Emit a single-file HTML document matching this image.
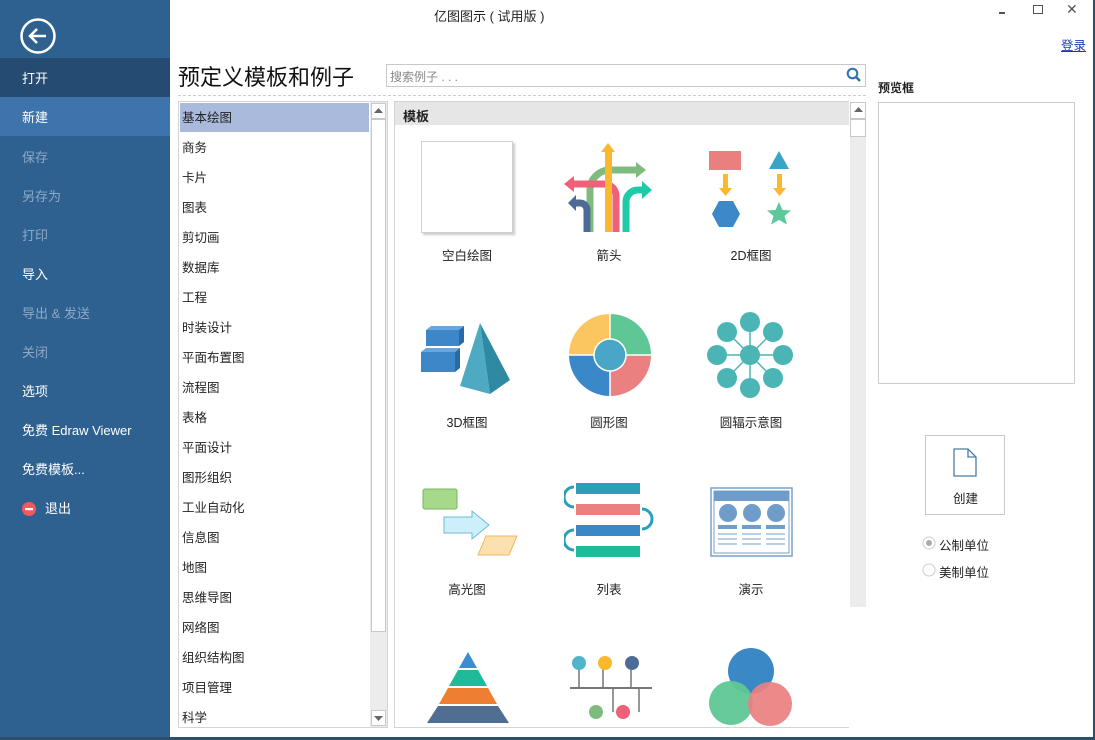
<!DOCTYPE html>
<html><head><meta charset="utf-8"><style>
*{margin:0;padding:0;box-sizing:border-box}
body{width:1095px;height:740px;position:relative;overflow:hidden;background:#fff;font-family:"Liberation Sans","Noto Sans CJK SC",sans-serif;font-size:13px;color:#222}
.abs{position:absolute}
#side{left:0;top:0;width:170px;height:740px;background:#2f6190}
.mi{position:absolute;left:0;width:170px;height:39px;line-height:42px;padding-left:22px;color:#fff;font-size:13px}
.dim{color:#8fa9c6}
.li{position:absolute;left:182px;font-size:12.5px;line-height:14px}
.lab{position:absolute;width:140px;text-align:center;font-size:12.5px}
</style></head><body>
<div id="side" class="abs">
 <svg class="abs" style="left:19px;top:17px" width="38" height="38"><circle cx="19" cy="19" r="16.5" fill="none" stroke="#fff" stroke-width="2.5"/><path d="M27 19H12M18 12l-7 7 7 7" fill="none" stroke="#fff" stroke-width="2.5"/></svg>
 <div class="mi" style="top:58px;background:#264b72">打开</div>
 <div class="mi" style="top:97px;background:#3d74ac">新建</div>
 <div class="mi dim" style="top:137px">保存</div>
 <div class="mi dim" style="top:176px">另存为</div>
 <div class="mi dim" style="top:215px">打印</div>
 <div class="mi" style="top:254px">导入</div>
 <div class="mi dim" style="top:293px">导出 &amp; 发送</div>
 <div class="mi dim" style="top:332px">关闭</div>
 <div class="mi" style="top:371px">选项</div>
 <div class="mi" style="top:410px">免费 Edraw Viewer</div>
 <div class="mi" style="top:449px">免费模板...</div>
 <div class="mi" style="top:488px;padding-left:45px">退出</div>
 <svg class="abs" style="left:22px;top:502px" width="14" height="14"><circle cx="7" cy="7" r="7" fill="#f05a5a"/><rect x="3" y="6" width="8" height="2.2" fill="#fff"/></svg>
</div>
<div class="abs" style="left:1093px;top:0;width:2px;height:740px;background:#2e4f6b"></div>
<div class="abs" style="left:0;top:737px;width:1095px;height:3px;background:#2e4f6b"></div>
<div class="abs" style="left:434px;top:6px;font-size:13px">亿图图示 ( 试用版 )</div>
<div class="abs" style="left:999px;top:12px;width:6px;height:2px;background:#555"></div>
<div class="abs" style="left:1033px;top:5px;width:10px;height:9px;border:1.3px solid #555"></div>
<div class="abs" style="left:1066px;top:1px;font-size:14px;color:#555">✕</div>
<div class="abs" style="left:1061px;top:35px;font-size:12.5px;color:#1a3ab0;text-decoration:underline">登录</div>
<div class="abs" style="left:178px;top:60px;font-size:22px;color:#111">预定义模板和例子</div>
<div class="abs" style="left:386px;top:64px;width:480px;height:23px;border:1px solid #c8c8c8"></div>
<div class="abs" style="left:390px;top:68px;font-size:12px;color:#888">搜索例子 . . .</div>
<svg class="abs" style="left:846px;top:67px" width="16" height="16"><circle cx="6.5" cy="6.5" r="4.8" fill="none" stroke="#2f6fb5" stroke-width="2"/><path d="M10 10l4 4" stroke="#2f6fb5" stroke-width="2.4"/></svg>
<div class="abs" style="left:178px;top:95px;width:688px;border-top:1px dashed #ccc"></div>
<div class="abs" style="left:178px;top:101px;width:210px;height:627px;border:1px solid #d4d4d4"></div>
<div class="abs" style="left:180px;top:103px;width:189px;height:29px;background:#aabadc"></div>
<div class="abs" style="left:370px;top:102px;width:17px;height:625px;background:#ececec"></div>
<div class="abs" style="left:371px;top:103px;width:15px;height:16px;background:#fff;border:1px solid #c8c8c8"></div>
<div class="abs" style="left:371px;top:119px;width:15px;height:513px;background:#fff;border:1px solid #c8c8c8"></div>
<div class="abs" style="left:371px;top:710px;width:15px;height:16px;background:#fff;border:1px solid #c8c8c8"></div>
<svg class="abs" style="left:373px;top:107px" width="11" height="8"><path d="M1 6h9L5.5 1z" fill="#666"/></svg>
<svg class="abs" style="left:373px;top:714px" width="11" height="8"><path d="M1 2h9L5.5 7z" fill="#666"/></svg>
<div class="li" style="top:111px">基本绘图</div>
<div class="li" style="top:141px">商务</div>
<div class="li" style="top:171px">卡片</div>
<div class="li" style="top:201px">图表</div>
<div class="li" style="top:231px">剪切画</div>
<div class="li" style="top:261px">数据库</div>
<div class="li" style="top:291px">工程</div>
<div class="li" style="top:321px">时装设计</div>
<div class="li" style="top:351px">平面布置图</div>
<div class="li" style="top:381px">流程图</div>
<div class="li" style="top:411px">表格</div>
<div class="li" style="top:441px">平面设计</div>
<div class="li" style="top:471px">图形组织</div>
<div class="li" style="top:501px">工业自动化</div>
<div class="li" style="top:531px">信息图</div>
<div class="li" style="top:561px">地图</div>
<div class="li" style="top:591px">思维导图</div>
<div class="li" style="top:621px">网络图</div>
<div class="li" style="top:651px">组织结构图</div>
<div class="li" style="top:681px">项目管理</div>
<div class="li" style="top:711px">科学</div>
<div class="abs" style="left:394px;top:101px;width:455px;height:627px;border-left:1px solid #d4d4d4;border-top:1px solid #d4d4d4;border-bottom:1px solid #d4d4d4"></div>
<div class="abs" style="left:395px;top:102px;width:454px;height:23px;background:#e6e6e6"></div>
<div class="abs" style="left:403px;top:106px;font-weight:bold;font-size:13px">模板</div>
<div class="abs" style="left:850px;top:102px;width:16px;height:505px;background:#ececec"></div>
<div class="abs" style="left:850px;top:102px;width:16px;height:17px;background:#fff;border:1px solid #c8c8c8"></div>
<div class="abs" style="left:850px;top:119px;width:16px;height:18px;background:#fff;border:1px solid #c8c8c8"></div>
<svg class="abs" style="left:853px;top:106px" width="11" height="8"><path d="M1 6h9L5.5 1z" fill="#666"/></svg>
<div class="abs" style="left:421px;top:141px;width:92px;height:92px;border:1px solid #d0d0d0;box-shadow:2px 2px 2px #ccc"></div>
<svg class="abs" style="left:560px;top:140px" width="96" height="94">
 <path d="M76 30H50a20 20 0 0 0-20 20V92" fill="none" stroke="#7fbb7f" stroke-width="7"/><path d="M76 22l10 8-10 8z" fill="#7fbb7f"/>
 <path d="M12 44H44a12 12 0 0 1 12 12V92" fill="none" stroke="#ef6079" stroke-width="7"/><path d="M14 36l-10 8 10 8z" fill="#ef6079"/>
 <path d="M14 63h6a7 7 0 0 1 7 7V92" fill="none" stroke="#4c6b96" stroke-width="7"/><path d="M16 55l-8 8 8 8z" fill="#4c6b96"/>
 <rect x="45" y="10" width="7" height="82" fill="#fbb82e"/><path d="M41 12l7-9 7 9z" fill="#fbb82e"/>
 <path d="M66 92V62a12 12 0 0 1 12-12h4" fill="none" stroke="#1fcaa8" stroke-width="7"/><path d="M82 41l10 9-10 9z" fill="#1fcaa8"/>
</svg>
<svg class="abs" style="left:705px;top:148px" width="90" height="82">
 <rect x="4" y="3" width="32" height="19" fill="#ea7f7f"/><rect x="18" y="26" width="5" height="16" fill="#fbb82e"/><path d="M14 40h13l-6.5 8z" fill="#fbb82e"/>
 <path d="M7 66l7-13h14l7 13-7 13H14z" fill="#3c88c8"/>
 <path d="M74 3l10 18H64z" fill="#3aa4c6"/><rect x="72" y="26" width="5" height="16" fill="#fbb82e"/><path d="M68 40h13l-6.5 8z" fill="#fbb82e"/>
 <path d="M74 54l3.5 8 8.5 .5-6.5 5.5 2.5 8.5-8-4.5-8 4.5 2.5-8.5-6.5-5.5 8.5-.5z" fill="#5cc99a"/>
</svg>
<div class="lab" style="left:397px;top:245px">空白绘图</div>
<div class="lab" style="left:539px;top:245px">箭头</div>
<div class="lab" style="left:681px;top:245px">2D框图</div>
<svg class="abs" style="left:418px;top:320px" width="100" height="75">
 <path d="M8 10l5-4h33l-5 4z" fill="#6aa6dc"/><rect x="8" y="10" width="33" height="16" fill="#3d87c8"/><path d="M41 10l5-4v16l-5 4z" fill="#2a68a8"/>
 <path d="M3 32l5-4h34l-5 4z" fill="#6aa6dc"/><rect x="3" y="32" width="34" height="20" fill="#3d87c8"/><path d="M37 32l5-4v20l-5 4z" fill="#2a68a8"/>
 <path d="M62 3L42 66l30 8z" fill="#4eaac2"/><path d="M62 3l30 57-20 14z" fill="#2e8aa3"/>
</svg>
<svg class="abs" style="left:567px;top:312px" width="86" height="86">
 <path d="M43 2A41 41 0 0 1 84 43H43z" fill="#5ec795"/><path d="M84 43A41 41 0 0 1 43 84V43z" fill="#ea8080"/>
 <path d="M43 84A41 41 0 0 1 2 43H43z" fill="#3b88c8"/><path d="M2 43A41 41 0 0 1 43 2V43z" fill="#fbc660"/>
 <path d="M43 2V84M2 43H84" stroke="#fff" stroke-width="1.5"/>
 <circle cx="43" cy="43" r="16" fill="#4aa6c6" stroke="#fff" stroke-width="1.5"/>
</svg>
<svg class="abs" style="left:706px;top:312px" width="90" height="86">
 <g stroke="#4bb5b5" stroke-width="1.5"><path d="M44 43L44 10M44 43L44 76M44 43L11 43M44 43L77 43M44 43L21 20M44 43L67 20M44 43L21 66M44 43L67 66"/></g>
 <g fill="#4bb5b5"><circle cx="44" cy="43" r="10"/><circle cx="44" cy="10" r="10"/><circle cx="44" cy="76" r="10"/><circle cx="11" cy="43" r="10"/><circle cx="77" cy="43" r="10"/><circle cx="21" cy="20" r="10"/><circle cx="67" cy="20" r="10"/><circle cx="21" cy="66" r="10"/><circle cx="67" cy="66" r="10"/></g>
</svg>
<div class="lab" style="left:397px;top:412px">3D框图</div>
<div class="lab" style="left:539px;top:412px">圆形图</div>
<div class="lab" style="left:681px;top:412px">圆辐示意图</div>
<svg class="abs" style="left:420px;top:487px" width="100" height="72">
 <rect x="3" y="2" width="34" height="20" rx="2" fill="#a6d98a" stroke="#7bb35e"/>
 <path d="M24 30H52V24l17 14-17 14V46H24z" fill="#cdeefb" stroke="#6fb9d6"/>
 <path d="M66 49h31l-8 19H58z" fill="#fde0b0" stroke="#efb95b"/>
</svg>
<svg class="abs" style="left:564px;top:482px" width="92" height="80">
 <rect x="12" y="1" width="64" height="11" fill="#2aa0b6"/><rect x="12" y="22" width="64" height="11" fill="#ea8080"/>
 <rect x="12" y="43" width="64" height="11" fill="#3a88c6"/><rect x="12" y="64" width="64" height="11" fill="#1fba9a"/>
 <g fill="none" stroke="#2aa0b6" stroke-width="3"><path d="M10 5a8 8 0 0 0 0 20"/><path d="M78 27a8 8 0 0 1 0 20"/><path d="M10 48a8 8 0 0 0 0 20"/></g>
</svg>
<svg class="abs" style="left:709px;top:486px" width="86" height="72">
 <rect x="2" y="2" width="81" height="68" fill="#fff" stroke="#7aa2c8" stroke-width="1.5"/><rect x="5" y="5" width="75" height="62" fill="none" stroke="#7aa2c8"/>
 <rect x="5" y="5" width="75" height="10" fill="#6f9cc8"/>
 <g fill="#6f9cc8"><circle cx="19" cy="27" r="9"/><circle cx="43" cy="27" r="9"/><circle cx="67" cy="27" r="9"/>
 <rect x="9" y="39" width="19" height="4"/><rect x="33" y="39" width="19" height="4"/><rect x="57" y="39" width="19" height="4"/></g>
 <g fill="#b9cfe4"><rect x="9" y="47" width="19" height="2"/><rect x="33" y="47" width="19" height="2"/><rect x="57" y="47" width="19" height="2"/><rect x="9" y="52" width="19" height="2"/><rect x="33" y="52" width="19" height="2"/><rect x="57" y="52" width="19" height="2"/><rect x="9" y="57" width="19" height="2"/><rect x="33" y="57" width="19" height="2"/><rect x="57" y="57" width="19" height="2"/></g>
</svg>
<div class="lab" style="left:397px;top:579px">高光图</div>
<div class="lab" style="left:539px;top:579px">列表</div>
<div class="lab" style="left:681px;top:579px">演示</div>
<svg class="abs" style="left:423px;top:650px" width="90" height="76">
 <path d="M45 2L54 18H36z" fill="#3a8ecf"/><path d="M35 20H55L64 36H26z" fill="#1fba9a"/><path d="M25 38H65L74 54H16z" fill="#ee7f32"/><path d="M15 56H75L86 73H4z" fill="#506e92"/>
</svg>
<svg class="abs" style="left:566px;top:650px" width="90" height="76">
 <path d="M4 38H86" stroke="#777" stroke-width="2"/><path d="M13 12V38M37 12V38M65 12V38M47 38V62M73 38V62" stroke="#777" stroke-width="1.5"/>
 <circle cx="13" cy="13" r="7" fill="#4fb4cc"/><circle cx="39" cy="13" r="7" fill="#fbb82e"/><circle cx="66" cy="13" r="7" fill="#4c6b96"/>
 <circle cx="30" cy="62" r="7" fill="#7fbb7f"/><circle cx="57" cy="62" r="7" fill="#ef6079"/>
</svg>
<svg class="abs" style="left:708px;top:647px" width="88" height="80">
 <circle cx="43" cy="24" r="23" fill="#3a88c6"/><circle cx="23" cy="56" r="22" fill="#5ec795" opacity=".95"/><circle cx="62" cy="57" r="22" fill="#ea8080" opacity=".92"/>
</svg>
<div class="abs" style="left:878px;top:79px;font-weight:bold;font-size:12px">预览框</div>
<div class="abs" style="left:878px;top:102px;width:197px;height:282px;border:1px solid #ccc"></div>
<div class="abs" style="left:925px;top:435px;width:80px;height:80px;border:1px solid #c8c8c8"></div>
<svg class="abs" style="left:952px;top:448px" width="26" height="30"><path d="M2 1H16L24 9V28H2z" fill="#fff" stroke="#4a7ea6" stroke-width="1.3"/><path d="M16 1V9H24" fill="none" stroke="#4a7ea6" stroke-width="1.3"/></svg>
<div class="abs" style="left:953px;top:488px;font-size:12.5px">创建</div>
<svg class="abs" style="left:922px;top:536px" width="14" height="14"><circle cx="7" cy="7" r="6" fill="#fff" stroke="#ccc"/><circle cx="7" cy="7" r="3" fill="#aaa"/></svg>
<div class="abs" style="left:939px;top:535px;font-size:12.5px">公制单位</div>
<svg class="abs" style="left:922px;top:563px" width="14" height="14"><circle cx="7" cy="7" r="6" fill="#fff" stroke="#ccc"/></svg>
<div class="abs" style="left:939px;top:562px;font-size:12.5px">美制单位</div>
</body></html>
